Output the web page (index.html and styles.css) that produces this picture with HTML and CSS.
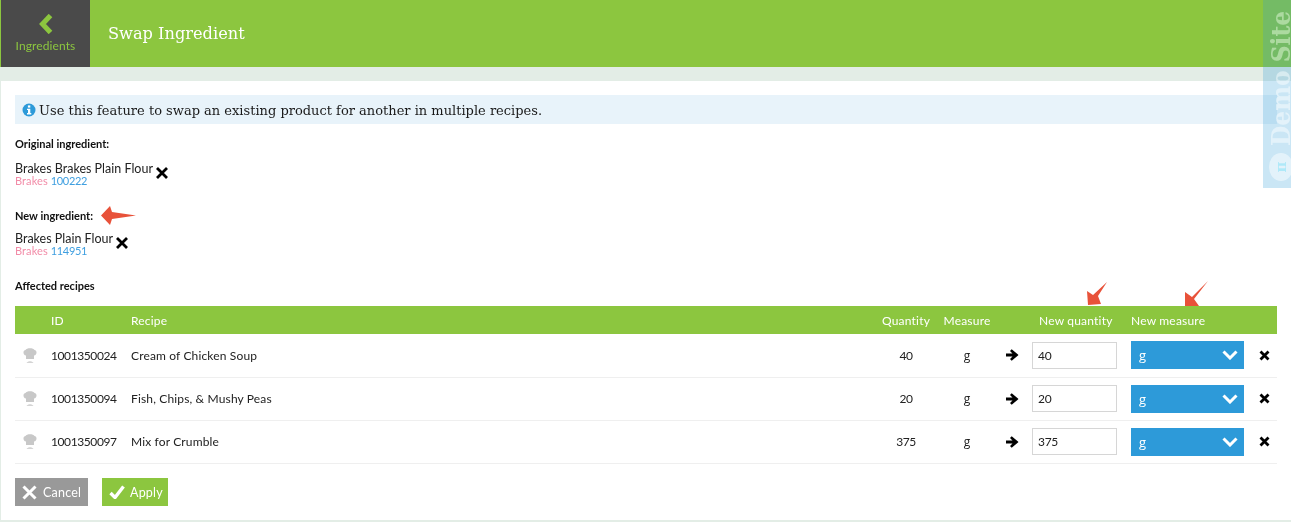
FILE: index.html
```html
<!DOCTYPE html>
<html lang="en">
<head>
<meta charset="utf-8">
<title>Swap Ingredient</title>
<link rel="stylesheet" href="styles.css">
</head>
<body>
<header class="topbar">
  <a class="back">
    <svg class="back-icon" viewBox="0 0 14 20" width="14" height="20"><path d="M11.500 1.500 3.500 10l8 8.500" fill="none" stroke="#8cc63f" stroke-width="5"/></svg>
    <span>Ingredients</span>
  </a>
  <h1 class="title">Swap Ingredient</h1>
</header>
<div class="strip"></div>
<main class="panel">
  <p class="notice">
    <svg class="info" viewBox="0 0 14 14" width="14" height="14"><circle cx="7" cy="7" r="6.500" fill="#2d9ad9"/><rect x="5.900" y="2.400" width="2.400" height="2.200" fill="#fff"/><path d="M5 5.700h3.300v4.300h1v1.400H5V10h1V7.100H5z" fill="#fff"/></svg>
    Use this feature to swap an existing product for another in multiple recipes.
  </p>

  <h2 class="label label-first">Original ingredient:</h2>
  <div class="ingredient">
    <div class="ing-text">
      <div class="ing-name">Brakes Brakes Plain Flour</div>
      <div class="ing-meta"><span class="brand">Brakes</span> <span class="code">100222</span></div>
    </div>
    <svg class="remove" viewBox="0 0 14 14" width="14" height="14"><path d="M2 2l10 10M12 2 2 12" stroke="#000" stroke-width="2.800" fill="none"/></svg>
  </div>

  <div class="label-row">
    <h2 class="label">New ingredient:</h2>
    <svg class="arrow-left" viewBox="0 0 35 19" width="35" height="19"><path d="M0 9.500 9 0l2 6 24 3.500L11 13l-2 6z" fill="#e8523a"/></svg>
  </div>
  <div class="ingredient ingredient-new">
    <div class="ing-text">
      <div class="ing-name">Brakes Plain Flour</div>
      <div class="ing-meta"><span class="brand">Brakes</span> <span class="code">114951</span></div>
    </div>
    <svg class="remove" viewBox="0 0 14 14" width="14" height="14"><path d="M2 2l10 10M12 2 2 12" stroke="#000" stroke-width="2.800" fill="none"/></svg>
  </div>

  <h2 class="label label-affected">Affected recipes</h2>

  <div class="table-wrap">
    <svg class="marker marker-qty" viewBox="0 0 21 24" width="21" height="24"><path d="M20 0 11 14l3 8-13 1L0 9l6 4z" fill="#e8523a"/></svg>
    <svg class="marker marker-measure" viewBox="0 0 24 25" width="24" height="25"><path d="M23 0 9 18l5 7H0V11l7 5z" fill="#e8523a"/></svg>
    <table class="recipes">
      <colgroup>
        <col class="c-icon"><col class="c-id"><col class="c-recipe"><col class="c-qty"><col class="c-measure"><col class="c-arrow"><col class="c-newqty"><col class="c-newmeasure"><col class="c-del">
      </colgroup>
      <thead>
        <tr><th></th><th>ID</th><th>Recipe</th><th class="center">Quantity</th><th class="center">Measure</th><th></th><th class="center-q">New quantity</th><th>New measure</th><th></th></tr>
      </thead>
      <tbody>
        <tr>
          <td class="icon-cell"><svg class="hat" viewBox="0 0 14 15" width="14" height="15"><path d="M3 11V7.500C0 7-.5 2.500 2.500 2c1-2.300 8-2.300 9 0C14.500 2.500 14 7 11 7.500V11z" fill="#c8c8c8"/><path d="M3.500 15c1.500-2.500 5.500-2.500 7 0z" fill="#d4d4d4"/></svg></td>
          <td class="digits">1001350024</td><td>Cream of Chicken Soup</td><td class="center digits">40</td><td class="center unit">g</td>
          <td class="arrow-cell"><svg viewBox="0 0 13 12" width="13" height="12"><path d="M0 4.500h6.500L4 2l1.700-1.800L12.500 6l-6.800 5.800L4 10l2.500-2.500H0z" fill="#000"/></svg></td>
          <td><input class="qty" type="text" value="40"></td>
          <td><div class="select"><span>g</span><svg viewBox="0 0 16 10" width="16" height="10"><path d="M1.500 1.500 8 8l6.500-6.500" fill="none" stroke="#fff" stroke-width="3"/></svg></div></td>
          <td class="del-cell"><svg viewBox="0 0 11 11" width="11" height="11"><path d="M1.500 1.500l8 8M9.500 1.500l-8 8" stroke="#000" stroke-width="2.800" fill="none"/></svg></td>
        </tr>
        <tr>
          <td class="icon-cell"><svg class="hat" viewBox="0 0 14 15" width="14" height="15"><path d="M3 11V7.500C0 7-.5 2.500 2.500 2c1-2.300 8-2.300 9 0C14.500 2.500 14 7 11 7.500V11z" fill="#c8c8c8"/><path d="M3.500 15c1.500-2.500 5.500-2.500 7 0z" fill="#d4d4d4"/></svg></td>
          <td class="digits">1001350094</td><td>Fish, Chips, &amp; Mushy Peas</td><td class="center digits">20</td><td class="center unit">g</td>
          <td class="arrow-cell"><svg viewBox="0 0 13 12" width="13" height="12"><path d="M0 4.500h6.500L4 2l1.700-1.800L12.500 6l-6.800 5.800L4 10l2.500-2.500H0z" fill="#000"/></svg></td>
          <td><input class="qty" type="text" value="20"></td>
          <td><div class="select"><span>g</span><svg viewBox="0 0 16 10" width="16" height="10"><path d="M1.500 1.500 8 8l6.500-6.500" fill="none" stroke="#fff" stroke-width="3"/></svg></div></td>
          <td class="del-cell"><svg viewBox="0 0 11 11" width="11" height="11"><path d="M1.500 1.500l8 8M9.500 1.500l-8 8" stroke="#000" stroke-width="2.800" fill="none"/></svg></td>
        </tr>
        <tr>
          <td class="icon-cell"><svg class="hat" viewBox="0 0 14 15" width="14" height="15"><path d="M3 11V7.500C0 7-.5 2.500 2.500 2c1-2.300 8-2.300 9 0C14.500 2.500 14 7 11 7.500V11z" fill="#c8c8c8"/><path d="M3.500 15c1.500-2.500 5.500-2.500 7 0z" fill="#d4d4d4"/></svg></td>
          <td class="digits">1001350097</td><td>Mix for Crumble</td><td class="center digits">375</td><td class="center unit">g</td>
          <td class="arrow-cell"><svg viewBox="0 0 13 12" width="13" height="12"><path d="M0 4.500h6.500L4 2l1.700-1.800L12.500 6l-6.800 5.800L4 10l2.500-2.500H0z" fill="#000"/></svg></td>
          <td><input class="qty" type="text" value="375"></td>
          <td><div class="select"><span>g</span><svg viewBox="0 0 16 10" width="16" height="10"><path d="M1.500 1.500 8 8l6.500-6.500" fill="none" stroke="#fff" stroke-width="3"/></svg></div></td>
          <td class="del-cell"><svg viewBox="0 0 11 11" width="11" height="11"><path d="M1.500 1.500l8 8M9.500 1.500l-8 8" stroke="#000" stroke-width="2.800" fill="none"/></svg></td>
        </tr>
      </tbody>
    </table>
  </div>

  <div class="actions">
    <button class="btn btn-cancel" type="button"><svg viewBox="0 0 15 15" width="15" height="15"><path d="M1.500 1.500l12 12M13.500 1.500l-12 12" stroke="#fff" stroke-width="3" fill="none"/></svg>Cancel</button>
    <button class="btn btn-apply" type="button"><svg viewBox="0 0 16 14" width="16" height="14"><path d="M1.500 8 6 12.500 14.500 1.500" stroke="#fff" stroke-width="3.400" fill="none"/></svg>Apply</button>
  </div>
</main>
<aside class="ribbon">
  <div class="ribbon-text">
    <span class="pi">π</span>
    <span class="demo">Demo Site</span>
  </div>
</aside>
</body>
</html>
```
FILE: styles.css
```css
* { box-sizing: border-box; }
html, body { margin: 0; height: 100%; }
body {
  background: #e3ede6;
  font-family: "Lato", "Open Sans", sans-serif;
  font-size: 12px;
  color: #222;
  overflow: hidden;
  position: relative;
}
.topbar {
  height: 67px;
  background: #8cc63f;
  display: flex;
  align-items: stretch;
  padding-left: 1px;
}
.back {
  width: 89px;
  background: #4a4a4a;
  color: #8cc63f;
  display: flex;
  flex-direction: column;
  align-items: center;
  padding-top: 14px;
  font-size: 12px;
  letter-spacing: .1px;
}
.back-icon { margin-bottom: 4px; }
.title {
  margin: 0 0 0 18px;
  align-self: center;
  font-family: "DejaVu Serif", "Liberation Serif", serif;
  font-weight: 400;
  font-size: 16.200px;
  color: #fff;
}
.strip { height: 14px; }
.panel {
  margin-left: 1px;
  background: #fff;
  height: 439px;
  padding: 14px 14px 0 14px;
}
.notice {
  margin: 0;
  height: 29px;
  background: #e8f3fa;
  display: flex;
  align-items: center;
  gap: 3px;
  padding: 1px 0 0 7px;
  font-family: "DejaVu Serif", "Liberation Serif", serif;
  font-size: 13px;
  color: #1a1a1a;
}
.label {
  margin: 0;
  font-size: 11px;
  font-weight: 700;
  color: #111;
  line-height: 13px;
}
.label-first { margin-top: 13px; }
.ingredient {
  display: flex;
  align-items: flex-start;
  gap: 2px;
  margin-top: 12px;
}
.ing-name { font-size: 12.500px; line-height: 14px; color: #222; }
.ing-meta { font-size: 11px; line-height: 12px; margin-top: -1px; }
.brand { color: #f28ca8; letter-spacing: .1px; }
.code { color: #3f9fe0; letter-spacing: -.3px; }
.remove { margin-top: 4px; }
.label-row {
  display: flex;
  align-items: center;
  gap: 8px;
  margin-top: 21px;
  height: 14px;
}
.ingredient-new { margin-top: 10px; }
.label-affected { margin-top: 22px; }
.table-wrap {
  position: relative;
  margin-top: 14px;
}
.marker { position: absolute; top: -24px; }
.marker-qty { left: 1072px; }
.marker-measure { left: 1170px; top: -25px; }
.recipes {
  width: 1262px;
  table-layout: fixed;
  border-collapse: collapse;
}
.c-icon { width: 36px; }
.c-id { width: 80px; }
.c-recipe { width: 744px; }
.c-qty { width: 62px; }
.c-measure { width: 60px; }
.c-arrow { width: 35px; }
.c-newqty { width: 99px; }
.c-newmeasure { width: 113px; }
.c-del { width: 33px; }
.recipes th {
  background: #8cc63f;
  color: #fff;
  height: 28px;
  font-weight: 400;
  font-size: 12px;
  letter-spacing: .2px;
  text-align: left;
  padding: 0;
}
.recipes td {
  height: 43px;
  padding: 0;
  border-bottom: 1px solid #efefef;
  font-size: 12px;
  letter-spacing: .15px;
  color: #222;
}
.recipes .center { text-align: center; }
.recipes .center-q { text-align: left; padding-left: 7px; }
.recipes .digits { letter-spacing: -.4px; }
.recipes .unit { font-family: "Open Sans", sans-serif; }
.icon-cell { padding-left: 8px !important; }
.hat { display: block; }
.arrow-cell svg, .del-cell svg { display: block; }
.arrow-cell svg { margin-left: 9px; }
.del-cell svg { margin-left: 15px; }
.qty {
  display: block;
  width: 85px;
  height: 27px;
  border: 1px solid #d6d6d6;
  background: #fff;
  padding: 0 0 0 5px;
  font: 12px "Lato", sans-serif;
  letter-spacing: -.3px;
  color: #222;
}
.select {
  width: 113px;
  height: 28px;
  background: #2d9ad9;
  color: #fff;
  display: flex;
  align-items: center;
  justify-content: space-between;
  padding: 0 6px 0 8px;
  font-family: "Open Sans", sans-serif;
  font-size: 13px;
}
.actions {
  display: flex;
  gap: 14px;
  margin-top: 14px;
}
.btn {
  height: 28px;
  border: 0;
  color: #fff;
  font: 12.500px "Lato", sans-serif;
  letter-spacing: .2px;
  display: flex;
  align-items: center;
  gap: 6px;
  padding: 1px 0 0 7px;
}
.btn-cancel { width: 73px; background: #999; }
.btn-apply { width: 66px; background: #8cc63f; gap: 5px; }
.ribbon {
  position: absolute;
  top: 0;
  right: 0;
  width: 28px;
  height: 188px;
  background: rgba(45, 154, 217, .25);
  overflow: hidden;
}
.ribbon-text {
  position: absolute;
  left: 0;
  top: 188px;
  width: 188px;
  height: 28px;
  transform-origin: 0 0;
  transform: rotate(-90deg);
  display: flex;
  align-items: center;
  gap: 7px;
  padding-left: 7px;
  color: #fff;
  white-space: nowrap;
  mix-blend-mode: soft-light;
}
.pi {
  width: 28px;
  height: 24px;
  flex: none;
  border-radius: 50%;
  background: #fff;
  color: #2d9ad9;
  display: flex;
  align-items: center;
  justify-content: center;
  font: 700 15px "DejaVu Serif", serif;
  position: relative;
  top: 4px;
}
.demo {
  font: 700 26px "DejaVu Serif Condensed", "DejaVu Serif", serif;
  font-stretch: condensed;
  position: relative;
  top: 4px;
}
```
